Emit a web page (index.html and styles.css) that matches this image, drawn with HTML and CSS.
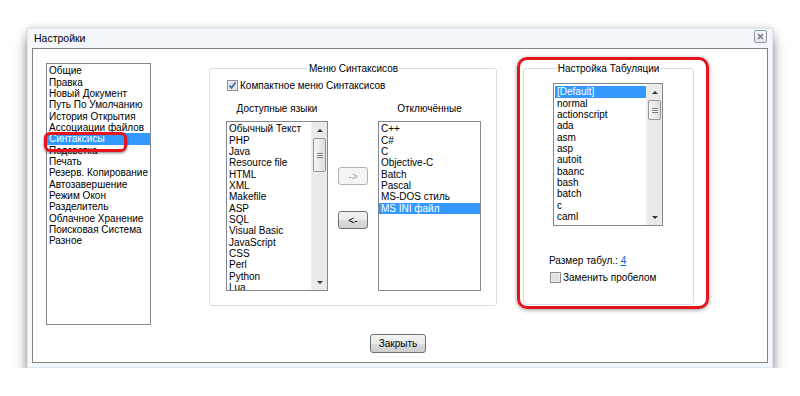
FILE: index.html
```html
<!DOCTYPE html>
<html lang="ru">
<head>
  <meta charset="UTF-8" />
  <meta name="viewport" content="width=device-width, initial-scale=1.0" />
  <title>Настройки</title>
  <link rel="stylesheet" href="styles.css">
</head>
<body>
  <div class="window">
    <div class="titlebar">
      <span class="title">Настройки</span>
      <span class="close-btn">
        <svg width="7" height="7" viewBox="0 0 7 7"><path d="M1 1 L6 6 M6 1 L1 6" stroke="#6a6f76" stroke-width="1.3" fill="none"/></svg>
      </span>
    </div>

    <div class="client">
      <div class="panes">
        <!-- Category list -->
        <div class="listbox categories">
          <div class="items">
            <div class="item">Общие</div>
            <div class="item">Правка</div>
            <div class="item">Новый Документ</div>
            <div class="item">Путь По Умолчанию</div>
            <div class="item">История Открытия</div>
            <div class="item">Ассоциации файлов</div>
            <div class="item selected">Синтаксисы</div>
            <div class="item">Подсветка</div>
            <div class="item">Печать</div>
            <div class="item">Резерв. Копирование</div>
            <div class="item">Автозавершение</div>
            <div class="item">Режим Окон</div>
            <div class="item">Разделитель</div>
            <div class="item">Облачное Хранение</div>
            <div class="item">Поисковая Система</div>
            <div class="item">Разное</div>
          </div>
          <div class="callout"></div>
        </div>

        <!-- Syntax menu group -->
        <fieldset class="group syntax-group">
          <legend>Меню Синтаксисов</legend>
          <div class="check-row">
            <span class="checkbox">
              <svg width="11" height="11" viewBox="0 0 11 11">
                <rect x="0.5" y="0.5" width="10" height="10" fill="#f4f6f9" stroke="#8e8f8f"/>
                <rect x="1.5" y="1.5" width="8" height="8" fill="#dfe4ea"/>
                <path d="M2.5 5.6 L4.5 8 L8.6 2.4" stroke="#3c5a9a" stroke-width="1.6" fill="none"/>
              </svg>
            </span>
            <span>Компактное меню Синтаксисов</span>
          </div>

          <div class="lang-columns">
            <div class="lang-col avail">
              <div class="col-title">Доступные языки</div>
              <div class="listbox lang-list">
                <div class="items">
                  <div class="item">Обычный Текст</div>
                  <div class="item">PHP</div>
                  <div class="item">Java</div>
                  <div class="item">Resource file</div>
                  <div class="item">HTML</div>
                  <div class="item">XML</div>
                  <div class="item">Makefile</div>
                  <div class="item">ASP</div>
                  <div class="item">SQL</div>
                  <div class="item">Visual Basic</div>
                  <div class="item">JavaScript</div>
                  <div class="item">CSS</div>
                  <div class="item">Perl</div>
                  <div class="item">Python</div>
                  <div class="item">Lua</div>
                </div>
                <div class="scrollbar">
                  <div class="sb-btn"><span class="arrow-up"></span></div>
                  <div class="sb-track"><div class="sb-thumb tall"><span class="grip"></span></div></div>
                  <div class="sb-btn"><span class="arrow-down"></span></div>
                </div>
              </div>
            </div>

            <div class="move-buttons">
              <button class="btn disabled">-&gt;</button>
              <button class="btn">&lt;-</button>
            </div>

            <div class="lang-col off">
              <div class="col-title">Отключённые</div>
              <div class="listbox lang-list">
                <div class="items">
                  <div class="item">C++</div>
                  <div class="item">C#</div>
                  <div class="item">C</div>
                  <div class="item">Objective-C</div>
                  <div class="item">Batch</div>
                  <div class="item">Pascal</div>
                  <div class="item">MS-DOS стиль</div>
                  <div class="item selected">MS INI файл</div>
                </div>
              </div>
            </div>
          </div>
        </fieldset>

        <!-- Tab settings group, outlined in red -->
        <div class="red-frame">
          <fieldset class="group tab-group">
            <legend>Настройка Табуляции</legend>
            <div class="listbox tab-list">
              <div class="items">
                <div class="item selected">[Default]</div>
                <div class="item">normal</div>
                <div class="item">actionscript</div>
                <div class="item">ada</div>
                <div class="item">asm</div>
                <div class="item">asp</div>
                <div class="item">autoit</div>
                <div class="item">baanc</div>
                <div class="item">bash</div>
                <div class="item">batch</div>
                <div class="item">c</div>
                <div class="item">caml</div>
              </div>
              <div class="scrollbar">
                <div class="sb-btn"><span class="arrow-up"></span></div>
                <div class="sb-track"><div class="sb-thumb short"><span class="grip"></span></div></div>
                <div class="sb-btn"><span class="arrow-down"></span></div>
              </div>
            </div>
            <div class="size-row">Размер табул.: <a class="link">4</a></div>
            <div class="check-row replace">
              <span class="checkbox">
                <svg width="11" height="11" viewBox="0 0 11 11">
                  <rect x="0.5" y="0.5" width="10" height="10" fill="#f4f4f4" stroke="#8e8f8f"/>
                  <rect x="1.5" y="1.5" width="8" height="8" fill="#e2e2e2"/>
                </svg>
              </span>
              <span>Заменить пробелом</span>
            </div>
          </fieldset>
        </div>
      </div>

      <div class="footer">
        <button class="btn close">Закрыть</button>
      </div>
    </div>
  </div>
</body>
</html>
```

FILE: styles.css
```css
* {
  box-sizing: border-box;
}

body {
  margin: 0;
  background-color: #fff;
  font-family: "Liberation Sans", Arial, sans-serif;
  font-size: 10px;
  color: #000;
}

/* Dialog window */
.window {
  width: 746px;
  margin: 28px 0 0 27px;
  padding: 0 4px 4px 4px;
  background-color: #f4f7fb;
  border: 1px solid #dfe5ec;
  box-shadow: 0 10px 12px rgba(0, 0, 0, 0.4), 0 0 7px rgba(0, 0, 0, 0.18);
}

.titlebar {
  display: flex;
  justify-content: space-between;
  align-items: flex-start;
  height: 19px;
}

.title {
  padding: 3px 0 0 2px;
  font-size: 10.5px;
  line-height: 13px;
}

.close-btn {
  display: flex;
  align-items: center;
  justify-content: center;
  width: 13px;
  height: 13px;
  margin: 1px 1px 0 0;
  border: 1px solid #8d959f;
  border-radius: 2px;
  background: linear-gradient(#f8f9fb, #e3e7ec);
}

.client {
  border: 1px solid #838383;
  background-color: #fff;
}

.panes {
  display: flex;
  align-items: flex-start;
  height: 277px;
}

/* List boxes */
.listbox {
  display: flex;
  border: 1px solid #828790;
  background-color: #fff;
  overflow: hidden;
}

.items {
  flex: 1;
  overflow: hidden;
  padding-top: 1.3px;
}

.item {
  height: 11.33px;
  line-height: 11.33px;
  padding-left: 2px;
  white-space: nowrap;
}

.item.selected {
  background-color: #3399ff;
  color: #fff;
}

.categories {
  position: relative;
  width: 105px;
  height: 262px;
  margin: 14px 0 0 13px;
  overflow: visible;
}

/* Red marker over the selected category */
.callout {
  position: absolute;
  left: -3px;
  top: 68px;
  width: 83px;
  height: 20px;
  border: 3px solid #e5131c;
  border-radius: 6px;
  box-shadow: 0 1px 3px rgba(0, 0, 0, 0.5);
}

/* Group boxes */
.group {
  margin: 0;
  border: 1px solid #d5dfe5;
  border-radius: 3px;
  min-width: 0;
}

.group legend {
  margin: 0 auto;
  padding: 0 1px;
  line-height: 13px;
}

.syntax-group {
  width: 288px;
  height: 244px;
  margin: 13px 0 0 58px;
  padding: 0 15px 13px 16px;
}

.check-row {
  display: flex;
  align-items: center;
  height: 13px;
  margin-top: 4px;
}

.checkbox {
  display: flex;
  width: 11px;
  height: 11px;
  margin: 0 2px 0 1px;
}

.lang-columns {
  display: flex;
  margin-top: 10px;
}

.lang-col.avail {
  width: 102px;
}

.lang-col.off {
  width: 103px;
}

.col-title {
  height: 13px;
  line-height: 13px;
  text-align: center;
  margin-bottom: 6px;
}

.lang-list {
  height: 170px;
}

.move-buttons {
  display: flex;
  flex-direction: column;
  gap: 26px;
  width: 30px;
  margin: 65px 10px 0 10px;
}

/* Buttons */
.btn {
  height: 18px;
  padding: 0;
  font-family: inherit;
  font-size: 10px;
  color: #000;
  border: 1px solid #707070;
  border-radius: 3px;
  background: linear-gradient(#f2f2f2 0%, #ebebeb 50%, #dddddd 51%, #cfcfcf 100%);
}

.btn.disabled {
  color: #9a9a9a;
  border-color: #adb2b5;
  background: #f4f4f4;
}

.footer {
  display: flex;
  justify-content: center;
  padding: 8px 4px 9px 0;
}

.btn.close {
  width: 56px;
  height: 19px;
}

/* Scrollbars */
.scrollbar {
  display: flex;
  flex-direction: column;
  width: 16px;
  background-color: #eaeaea;
  border-left: 1px solid #f0f0f0;
}

.sb-btn {
  display: flex;
  align-items: center;
  justify-content: center;
  height: 16px;
}

.arrow-up {
  border-left: 3px solid transparent;
  border-right: 3px solid transparent;
  border-bottom: 3px solid #333;
}

.arrow-down {
  border-left: 3px solid transparent;
  border-right: 3px solid transparent;
  border-top: 3px solid #333;
}

.sb-track {
  flex: 1;
}

.sb-thumb {
  display: flex;
  align-items: center;
  justify-content: center;
  margin: 0 1px;
  border: 1px solid #979797;
  border-radius: 2px;
  background: linear-gradient(to right, #f5f5f5, #dedede);
}

.sb-thumb.tall {
  height: 34px;
}

.sb-thumb.short {
  height: 20px;
}

.grip {
  width: 6px;
  height: 5px;
  border-top: 1px solid #777;
  border-bottom: 1px solid #777;
  background: linear-gradient(#fff 0 1px, #777 1px 2px, #fff 2px);
}

/* Tab settings, outlined in red */
.red-frame {
  width: 192px;
  height: 252px;
  margin: 8px 0 0 20px;
  padding: 2px 12px 1px 3px;
  border: 3px solid #e5131c;
  border-radius: 10px;
  box-shadow: 0 1px 4px rgba(0, 0, 0, 0.4);
}

.tab-group {
  width: 171px;
  height: 243px;
  padding: 0;
}

.tab-list {
  width: 110px;
  height: 143px;
  margin: 8px 0 0 29px;
}

.tab-list .items {
  padding: 2.3px 0 0 1px;
}

.size-row {
  height: 13px;
  line-height: 13px;
  margin: 28px 0 0 25px;
}

.link {
  color: #0066cc;
  text-decoration: underline;
}

.check-row.replace {
  margin: 4px 0 0 26px;
}

.check-row.replace .checkbox {
  margin-left: 0;
}
```
